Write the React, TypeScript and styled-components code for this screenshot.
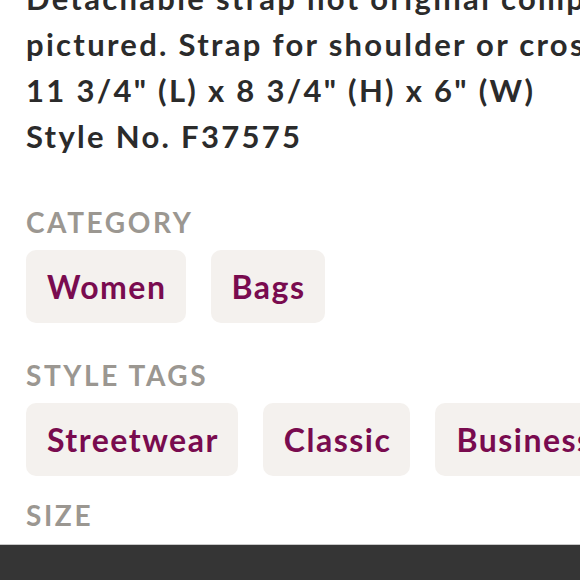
import styled, { createGlobalStyle } from 'styled-components';

const GlobalStyle = createGlobalStyle`
	html, body {
		margin: 0;
		padding: 0;
		background: #ffffff;
		overflow: hidden;
	}
	body {
		font-family: Lato, 'Noto Sans', sans-serif;
		-webkit-font-smoothing: antialiased;
	}
`;

const Screen = styled.div`
	display: flex;
	flex-direction: column;
	width: 580px;
	height: 580px;
	overflow: hidden;
`;

const Content = styled.div`
	flex: 1;
	padding-left: 26px;
	overflow: hidden;
`;

const Description = styled.p`
	margin: -25px 0 0;
	font-size: 31px;
	font-weight: 700;
	line-height: 46px;
	letter-spacing: 2.3px;
	color: #2b2b2b;
	white-space: nowrap;
`;

const Section = styled.section<{ $gap: number }>`
	margin-top: ${(p) => p.$gap}px;
`;

const Label = styled.h3`
	margin: 0;
	font-size: 28px;
	font-weight: 700;
	line-height: 32px;
	letter-spacing: 2.6px;
	color: #9b9791;
	text-transform: uppercase;
`;

const ChipRow = styled.div`
	display: flex;
	gap: 25px;
	margin-top: 12px;
	flex-wrap: nowrap;
`;

const Chip = styled.span`
	display: inline-flex;
	align-items: center;
	flex-shrink: 0;
	height: 73px;
	padding: 0 19px 0 21px;
	border-radius: 10px;
	background: #f4f1ee;
	color: #790b4f;
	font-size: 32px;
	font-weight: 700;
	letter-spacing: 1.5px;
`;

const BottomBar = styled.div`
	height: 35px;
	background: #353535;
	border-top: 1px solid #c9c9c9;
`;

const sections = [
	{ title: 'Category', gap: 47, tags: ['Women', 'Bags'] },
	{ title: 'Style Tags', gap: 36, tags: ['Streetwear', 'Classic', 'Business'] },
	{ title: 'Size', gap: 23, tags: [] as string[] },
];

export default function App() {
	return (
		<>
			<GlobalStyle />
			<Screen>
				<Content>
					<Description>
						Detachable strap not original component
						<br />
						pictured. Strap for shoulder or crossbody.
						<br />
						11 3/4" (L) x 8 3/4" (H) x 6" (W)
						<br />
						Style No. F37575
					</Description>
					{sections.map((s) => (
						<Section key={s.title} $gap={s.gap}>
							<Label>{s.title}</Label>
							{s.tags.length > 0 ? (
								<ChipRow>
									{s.tags.map((t) => (
										<Chip key={t}>{t}</Chip>
									))}
								</ChipRow>
							) : null}
						</Section>
					))}
				</Content>
				<BottomBar />
			</Screen>
		</>
	);
}
